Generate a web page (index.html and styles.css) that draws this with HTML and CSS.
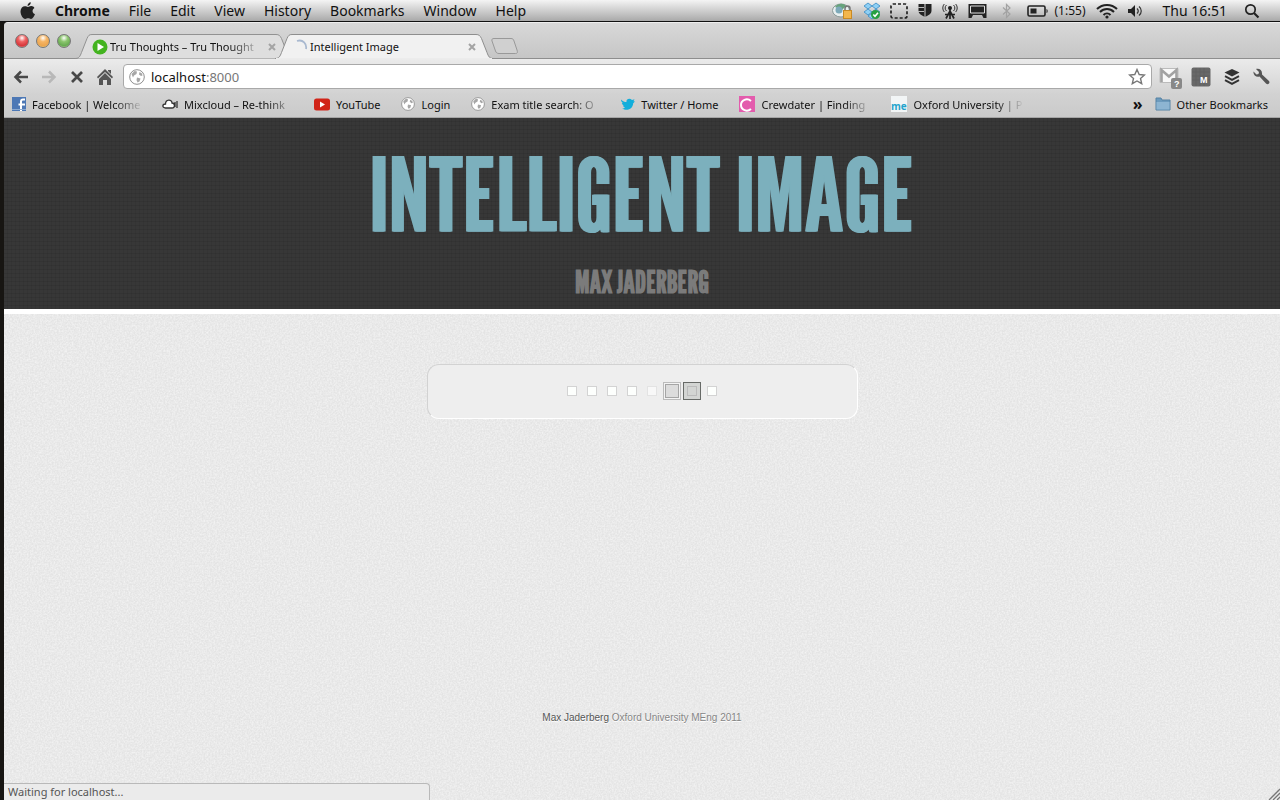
FILE: index.html
```html
<!DOCTYPE html>
<html lang="en">
<head>
<meta charset="utf-8">
<title>Intelligent Image</title>
<link rel="stylesheet" href="styles.css">
</head>
<body>
<header class="menubar">
  <nav class="menus" aria-label="Application menu">
    <button class="apple" aria-label="Apple"><svg width="16" height="18" viewBox="0 0 16 18"><path fill="#222" d="M10.800 0.300c.2 1.800-1.500 3.700-3.200 3.600-.2-1.700 1.500-3.500 3.200-3.600zM8 4.900c.8 0 1.800-.9 3.300-.8 1.400.1 2.500.8 3.100 1.800-2.700 1.700-2.300 5.100.6 6.200-.8 2.300-2.300 4.900-4 4.900-1.100 0-1.600-.7-2.900-.7s-1.800.7-2.900.7C3 17 .4 12.700.5 9.300.6 6 2.700 4.200 4.900 4.200c1.300 0 2.300.7 3.100.7z"/></svg></button>
    <button class="app">Chrome</button><button>File</button><button>Edit</button><button>View</button><button>History</button><button>Bookmarks</button><button>Window</button><button>Help</button>
  </nav>
  <div class="status-items">
    <svg width="22" height="18" viewBox="0 0 22 18"><ellipse cx="9" cy="8.500" rx="8.500" ry="6.500" fill="#e9efef" stroke="#8a9a98"/><path d="M3 5c3-4 9-4 11-1l-4 4z" fill="#67a37b"/><circle cx="7" cy="8" r="3.500" fill="#7da9b9"/><path d="M13 9V6.500a2.500 2.500 0 0 1 5 0V9" fill="none" stroke="#777" stroke-width="1.500"/><rect x="11.500" y="8.500" width="8" height="8" fill="#f3b64c" stroke="#c98a24"/></svg>
    <svg width="18" height="18" viewBox="0 0 18 18"><path d="M5 1l4 3-4 3-4-3zm8 0l4 3-4 3-4-3zM5 7l4 3-4 3-4-3zm8 0l4 3-4 3-4-3zM9 11l4 3-4 3-4-3z" fill="#8fd0f5" stroke="#378cc4" stroke-width=".8"/><circle cx="12.500" cy="12.500" r="4.500" fill="#26a041"/><path d="M10.300 12.500l1.700 1.800 3-3.500" fill="none" stroke="#fff" stroke-width="1.600"/></svg>
    <svg width="18" height="16" viewBox="0 0 18 16"><rect x="1" y="1" width="16" height="14" rx="2" fill="none" stroke="#222" stroke-width="1.700" stroke-dasharray="3 2"/></svg>
    <svg class="wide" width="14" height="15" viewBox="0 0 14 15"><path fill="#222" d="M.5 1h6v12.800C3 12 .5 10.500.5 8zM7.500 1h6v7c0 2.500-2.500 4-6 5.800z"/><path stroke="#bbb" d="M0 4.500h6M0 8.500h6"/></svg>
    <svg class="wide" width="16" height="16" viewBox="0 0 16 16"><path d="M8 5v11M4 15.500L8 8l4 7.500M3 11.500h10" fill="none" stroke="#222" stroke-width="1.700"/><circle cx="8" cy="5" r="2" fill="#222"/><path d="M4.500 2a4 4 0 0 0 0 6M11.500 2a4 4 0 0 1 0 6M2.300 1a6 6 0 0 0 0 8M13.700 1a6 6 0 0 1 0 8" fill="none" stroke="#333"/></svg>
    <svg class="wide" width="19" height="16" viewBox="0 0 19 16"><path d="M.5 1h18v14h-3l-1.500-3h-9L3.500 15h-3z" fill="#222"/><path d="M2.500 3h14v7h-14z" fill="none" stroke="#ddd"/></svg>
    <svg class="bt" width="10" height="16" viewBox="0 0 10 16"><path d="M1 4.500l7 6.500-3.500 3.500V1.500L8 5l-7 6.500" fill="none" stroke="#a2a2a2" stroke-width="1.200"/></svg>
    <svg width="22" height="14" viewBox="0 0 22 14"><rect x="1" y="2" width="17" height="10" rx="1.500" fill="none" stroke="#222" stroke-width="1.600"/><path d="M3.500 4.500h6v5h-6z" fill="#222"/><path d="M19.500 5c1.500 0 1.500 4 0 4z" fill="#222"/></svg>
    <span class="charge">(1:55)</span>
    <svg width="22" height="16" viewBox="0 0 22 16"><path d="M1 6c5.500-5.500 14.500-5.500 20 0M4 9c4-4 10-4 14 0M7.500 12c2-2 5-2 7 0" fill="none" stroke="#222" stroke-width="2"/><circle cx="11" cy="14" r="1.600" fill="#222"/></svg>
    <svg width="16" height="14" viewBox="0 0 16 14"><path d="M1 5h3l4-4v12L4 9H1z" fill="#222"/><path d="M10 4.500c1.500 1.500 1.500 3.500 0 5M12 2.500c3 2.500 3 6.500 0 9" fill="none" stroke="#333" stroke-width="1.200"/></svg>
    <span class="clock">Thu 16:51</span>
    <svg width="16" height="16" viewBox="0 0 16 16"><circle cx="6.500" cy="6.500" r="4.700" fill="none" stroke="#222" stroke-width="1.700"/><path d="M10 10l4.500 4.500" stroke="#222" stroke-width="2.200"/></svg>
  </div>
</header>

<div class="window">
  <div class="tabstrip">
    <div class="lights"><button class="light red" aria-label="Close"></button><button class="light amber" aria-label="Minimise"></button><button class="light green" aria-label="Zoom"></button></div>
    <div class="tabs">
      <div class="tab">
        <svg class="tab-shape" viewBox="0 0 218 25"><path d="M0 24.500c4 0 5-2 6.500-6L12 4.500C13.500 1.500 14 .5 17 .5h184c3 0 4 1 5.500 4l5.500 14c1.500 4 2.500 6 6 6" fill="#dedede" stroke="#929292"/></svg>
        <svg width="16" height="16" viewBox="0 0 16 16"><circle cx="8" cy="8" r="7.500" fill="#43b31f"/><path d="M5.500 4l6.500 4-6.500 4z" fill="#fff"/></svg>
        <a href="#" class="tab-title fade">Tru Thoughts – Tru Thought</a>
        <button class="tab-close" aria-label="Close tab"><svg width="8" height="8" viewBox="0 0 8 8"><path d="M1 1l6 6M7 1L1 7" stroke="#a4a4a4" stroke-width="2"/></svg></button>
      </div>
      <div class="tab active">
        <svg class="tab-shape" viewBox="0 0 218 25"><path d="M0 24.500c4 0 5-2 6.500-6L12 4.500C13.500 1.500 14 .5 17 .5h184c3 0 4 1 5.500 4l5.500 14c1.500 4 2.500 6 6 6" fill="#f1f1f1" stroke="#8e8e8e"/><path d="M1 25h216" stroke="#ececec" stroke-width="2"/></svg>
        <svg width="16" height="16" viewBox="0 0 16 16"><path d="M5 2c6-2 10 3 9 8" fill="none" stroke="#a9b9d0" stroke-width="1.800"/></svg>
        <a href="#" class="tab-title">Intelligent Image</a>
        <button class="tab-close" aria-label="Close tab"><svg width="8" height="8" viewBox="0 0 8 8"><path d="M1 1l6 6M7 1L1 7" stroke="#a4a4a4" stroke-width="2"/></svg></button>
      </div>
      <button class="new-tab" aria-label="New tab"><svg width="27" height="17" viewBox="0 0 27 17"><path d="M3 .5h17c2 0 2.500 1 3 2.500l3 9c.8 2.500.5 3.500-1.500 3.500H8c-2 0-3-1-3.500-2.500l-3.500-10C.5 1.500 1 .5 3 .5z" fill="#d0d0d0" stroke="#999"/></svg></button>
    </div>
  </div>

  <div class="toolbar">
    <button aria-label="Back"><svg width="16" height="16" viewBox="0 0 16 16"><path d="M15 8H3M8 2.500L2.500 8 8 13.500" fill="none" stroke="#484848" stroke-width="2.500"/></svg></button>
    <button aria-label="Forward"><svg width="16" height="16" viewBox="0 0 16 16"><path d="M1 8h12M8 2.500L13.500 8 8 13.500" fill="none" stroke="#b8b8b8" stroke-width="2.500"/></svg></button>
    <button aria-label="Stop"><svg width="16" height="16" viewBox="0 0 16 16"><path d="M3 3l10 10M13 3L3 13" stroke="#484848" stroke-width="2.700"/></svg></button>
    <button aria-label="Home"><svg width="16" height="16" viewBox="0 0 16 16"><path d="M8 0l8 8-1 1.500L8 3 1 9.500 0 8zM11 1h3v4l-3-3zM8 4l6 6v6h-4v-5H6v5H2v-6z" fill="#555"/></svg></button>
    <div class="omnibox">
      <svg width="16" height="16" viewBox="0 0 16 16"><circle cx="8" cy="8" r="7.300" fill="#fff" stroke="#8f8f8f"/><path d="M2.500 5l3-3 2.500.5-.5 2.500-2.500 1.500-1 2zM10.500 3l2.500 1.500.5 2-1.500.5-2-1.500zM8 8.500l3.500 1-1 3-2 1-1-2.500z" fill="#a6a6a6"/></svg>
      <div class="address" contenteditable="true" role="textbox" aria-label="Address">localhost<span>:8000</span></div>
      <button aria-label="Bookmark this page"><svg width="18" height="17" viewBox="0 0 18 17"><path d="M9 1.500l2.200 5 5.300.5-4 3.500 1.200 5.200L9 13l-4.700 2.700 1.200-5.200-4-3.500 5.300-.5z" fill="#fff" stroke="#777" stroke-width="1.400"/></svg></button>
    </div>
    <div class="extensions">
      <button aria-label="Mail"><svg width="24" height="24" viewBox="0 0 24 24"><path d="M1 3.500h18v14H1z" fill="#f8f8f8" stroke="#bbb"/><path d="M2.500 17V5L10 11.500 17.500 5V17" fill="none" stroke="#a2a2a2" stroke-width="2.600"/><rect x="12" y="13" width="11" height="11" rx="2" fill="#888"/><text x="15" y="22" class="badge-text">?</text></svg></button>
      <button aria-label="M extension"><svg width="20" height="20" viewBox="0 0 20 20"><rect x=".5" y=".5" width="19" height="19" rx="2" fill="#686868"/><path d="M1 5h18M1 9h18M1 13h18M5 1v18M9 1v18M13 1v18" stroke="#606060"/><text x="9" y="16" class="badge-text">M</text></svg></button>
      <button aria-label="Layers"><svg width="16" height="16" viewBox="0 0 16 16"><path d="M8 0l7.500 3.500L8 7.500.5 3.500z" fill="#333"/><path d="M1 7.200l7 3.600 7-3.600M1 11.200l7 3.600 7-3.600" fill="none" stroke="#333" stroke-width="2"/></svg></button>
      <button aria-label="Settings"><svg width="17" height="17" viewBox="0 0 17 17"><path d="M3 1l3 3-.5 2-2 .5L.5 3.500C0 7 3 9.500 6.500 8.500l6.500 7c2 2 4.500-.5 3-2.500L9 6.500C9.500 2.500 6.500 0 3 1z" fill="#555"/></svg></button>
    </div>
  </div>

  <nav class="bookmarks" aria-label="Bookmarks">
    <a href="#"><svg width="14" height="14" viewBox="0 0 14 14"><path d="M0 0h14v14H0z" fill="#4d78b5"/><path d="M13 2.500h-2q-2 0-2 2V14M6.500 7.500H13" fill="none" stroke="#fff" stroke-width="2"/><path d="M0 12.500h14" stroke="#8caad1"/></svg><span class="long">Facebook | Welcome</span></a>
    <a href="#"><svg width="16" height="12" viewBox="0 0 16 12"><path d="M3.500 10C0 10 0 6 3.500 6 3.500 1 10 1 10 5c3 0 3.500 5 0 5zM13 4v5M15 3v7" fill="#fff" stroke="#333" stroke-width="1.300"/></svg><span class="long">Mixcloud – Re-think</span></a>
    <a href="#"><svg width="16" height="13" viewBox="0 0 16 13"><rect y=".5" width="16" height="12" rx="2.500" fill="#d12418"/><path d="M6 3.500l5 3-5 3z" fill="#fff"/></svg><span class="short">YouTube</span></a>
    <a href="#"><svg width="14" height="14" viewBox="0 0 16 16"><circle cx="8" cy="8" r="7.300" fill="#fff" stroke="#8f8f8f"/><path d="M2.500 5l3-3 2.500.5-.5 2.500-2.500 1.500-1 2zM10.500 3l2.500 1.500.5 2-1.500.5-2-1.500zM8 8.500l3.500 1-1 3-2 1-1-2.500z" fill="#a6a6a6"/></svg><span class="short">Login</span></a>
    <a href="#"><svg width="14" height="14" viewBox="0 0 16 16"><circle cx="8" cy="8" r="7.300" fill="#fff" stroke="#8f8f8f"/><path d="M2.500 5l3-3 2.500.5-.5 2.500-2.500 1.500-1 2zM10.500 3l2.500 1.500.5 2-1.500.5-2-1.500zM8 8.500l3.500 1-1 3-2 1-1-2.500z" fill="#a6a6a6"/></svg><span class="long">Exam title search: O</span></a>
    <a href="#"><svg width="14" height="12" viewBox="0 0 14 12"><path d="M0 1.500c2 2 3.500 2.500 5.500 2.500C5 1 8.500-.5 11 2l2.500-.7-1 2 1.500.2-1.800 1.700C12 10 7 14 1 10.500c1.500 0 2.500-.5 3-1C2.500 9 2 8 2 7.500H3C1.500 7 .5 5.500 1 5l1 .2C.5 4 0 3 0 1.500z" fill="#12aedb"/></svg><span class="short">Twitter / Home</span></a>
    <a href="#"><svg width="16" height="16" viewBox="0 0 16 16"><path d="M0 0h16v16H0z" fill="#e35cad"/><path d="M12 5C8 1.500 2 4 2 9s6 7.500 10 4" fill="none" stroke="#fff" stroke-width="2"/></svg><span class="long">Crewdater | Finding</span></a>
    <a href="#"><svg width="16" height="16" viewBox="0 0 16 16"><path d="M0 0h16v16H0z" fill="#f2f5f6"/><text x="0" y="14" class="me-text">me</text></svg><span class="long">Oxford University | P</span></a>
    <span class="other"><button aria-label="More bookmarks" class="more">»</button><a href="#"><svg width="16" height="14" viewBox="0 0 16 14"><path d="M1 3V1h5l1 2h8v10H1z" fill="#6d9bbd" stroke="#5482a4"/><path d="M1.500 5h13v7.500h-13z" fill="#8db5d2"/></svg><span>Other Bookmarks</span></a></span>
  </nav>

  <main class="page">
    <div class="hero"><h1>INTELLIGENT IMAGE</h1><h2>MAX JADERBERG</h2></div>
    <div class="content">
      <svg class="grain" aria-hidden="true"><filter id="grain"><feTurbulence type="fractalNoise" baseFrequency=".6" numOctaves="2" seed="4"/><feColorMatrix values="0 0 0 0 1  0 0 0 0 1  0 0 0 0 1  1 0 0 0 -.3"/></filter><rect width="100%" height="100%" filter="url(#grain)"/></svg>
      <div class="loader" role="progressbar" aria-label="Loading"><i></i><i></i><i></i><i></i><i class="faint"></i><i class="ring"></i><i class="peak"></i><i></i></div>
      <footer><a href="#">Max Jaderberg</a> Oxford University MEng 2011</footer>
    </div>
  </main>
  <div class="status">Waiting for localhost...</div>
  <svg class="grip" width="12" height="12" viewBox="0 0 12 12"><path d="M1 12L12 1M5 12l7-7M9 12l3-3" stroke="#777" stroke-width="1.300"/></svg>
</div>
</body>
</html>
```
FILE: styles.css
```css
* { box-sizing: border-box; }
body {
  margin: 0;
  min-height: 100vh;
  display: flex;
  flex-direction: column;
  background: #171512;
  color: #111;
  font-family: "Lucida Grande", "Noto Sans", "Open Sans", sans-serif;
  font-size: 11px;
}
button { border: 0; margin: 0; padding: 0; background: none; font: inherit; color: inherit; display: flex; align-items: center; }
a { color: inherit; text-decoration: none; }
svg { flex: none; display: block; }

.menubar {
  display: flex;
  justify-content: space-between;
  height: 22px;
  padding: 0 20px;
  border-bottom: 1px solid #111;
  background: linear-gradient(#f4f4f4, #a9a9a9);
  font-size: 14px;
}
.menus, .status-items { display: flex; align-items: center; }
.menus { gap: 19px; }
.menus .app { font-weight: 700; }
.status-items { gap: 9px; }
.status-items .wide { margin-left: 1px; }
.status-items .bt { margin: 0 6px; }
.charge { font-size: 12px; margin: 0 2px 0 -4px; }
.clock { margin: 0 8px 0 10px; }

.window {
  flex: 1;
  display: flex;
  flex-direction: column;
  position: relative;
  margin: 0 0 0 4px;
  border-top: 1px solid #eee;
  border-top-left-radius: 4px;
  background: #d2d2d2;
}
.tabstrip {
  display: flex;
  height: 36px;
  align-items: flex-end;
  border-top-left-radius: 4px;
  background: linear-gradient(#d8d8d8, #c6c6c6);
  border-bottom: 1px solid #8e8e8e;
}
.lights { display: flex; gap: 7px; padding: 0 4px 10px 11px; }
.light { width: 14px; height: 14px; border-radius: 50%; border: 1px solid #777; }
.red { background: radial-gradient(circle at 50% 25%, #fff 0, #ef6262 35%, #d7373b 70%, #f29b9b); }
.amber { background: radial-gradient(circle at 50% 25%, #fff 0, #f5b566 35%, #eca650 70%, #ffe08a); }
.green { background: radial-gradient(circle at 50% 25%, #fff 0, #8cc66f 35%, #68ab52 70%, #c2eaa0); }
.tabs { display: flex; align-items: center; }
.tab {
  position: relative;
  display: flex;
  align-items: center;
  gap: 2px;
  width: 218px;
  height: 25px;
  padding: 0 17px;
  margin-bottom: -1px;
}
.tab + .tab { margin-left: -18px; }
.tab > * { position: relative; }
.tab .tab-shape { position: absolute; inset: 0; width: 100%; height: 100%; }
.tab-title { flex: 1; white-space: nowrap; overflow: hidden; color: #111; }
.fade { -webkit-mask-image: linear-gradient(90deg, #000 78%, transparent); mask-image: linear-gradient(90deg, #000 78%, transparent); }
.tab-close { padding-left: 3px; }
.new-tab { margin-left: -2px; }

.toolbar {
  display: flex;
  align-items: center;
  gap: 12px;
  height: 35px;
  padding: 0 10px 0 9px;
  background: linear-gradient(#ebebeb, #d2d2d2);
}
.omnibox {
  flex: 1;
  display: flex;
  align-items: center;
  gap: 6px;
  height: 25px;
  margin: 0 -5px 0 -2px;
  padding: 0 5px;
  border: 1px solid #a9a9a9;
  border-radius: 4px;
  background: #fff;
}
.address { flex: 1; font-size: 13px; line-height: 20px; outline: none; }
.address span { color: #777; }
.extensions { display: flex; align-items: center; gap: 13px; }
.extensions button:first-child { margin-right: -5px; }
.badge-text { fill: #fff; font: 700 9px "Liberation Sans", sans-serif; }
.me-text { fill: #25a4cc; font: 700 10px "Open Sans", sans-serif; }

.bookmarks {
  display: flex;
  align-items: center;
  gap: 19px;
  height: 24px;
  padding: 0 12px 3px 8px;
  background: linear-gradient(#d2d2d2, #cacaca);
  border-bottom: 1px solid #a5a5a5;
  white-space: nowrap;
}
.bookmarks a { display: flex; align-items: center; gap: 6px; }
.long { width: 111px; overflow: hidden; -webkit-mask-image: linear-gradient(90deg, #000 75%, transparent); mask-image: linear-gradient(90deg, #000 75%, transparent); }
.short { padding-right: 2px; }
.other { display: flex; gap: 12px; margin-left: auto; }
.more { font-size: 16px; font-weight: 700; line-height: 16px; }

.page { flex: 1; display: flex; flex-direction: column; }
.hero {
  height: 196px;
  padding-top: 16px;
  border-bottom: 5px solid #fff;
  background: repeating-linear-gradient(90deg, transparent 0 3px, rgba(0, 0, 0, .06) 3px 4px), repeating-linear-gradient(#373737 0 3px, #333 3px 4px);
  text-align: center;
  font-family: "League Gothic", "Oswald", "Noto Sans ExtraCondensed", "Open Sans Condensed", "Roboto Condensed", "Liberation Sans Narrow", sans-serif;
}
.hero h1 { margin: 0; font-size: 102px; font-weight: 400; line-height: 120px; color: #7cb0bd; text-shadow: 1px 0 #7cb0bd, -1px 0 #7cb0bd; }
.hero h2 { margin: 0; font-size: 30px; line-height: 56px; color: #7b7b7b; }
.content { position: relative; flex: 1; display: flex; flex-direction: column; align-items: center; padding-top: 50px; background: #e4e4e4; }
.grain { position: absolute; inset: 0; width: 100%; height: 100%; }
.loader {
  position: relative;
  display: flex;
  justify-content: center;
  gap: 2px;
  width: 431px;
  padding: 17px 0 18px;
  border: 1px solid;
  border-color: #d2d2d2 #fff #fff #d2d2d2;
  border-radius: 12px;
  background: #eee;
}
.loader i { width: 18px; height: 18px; border: 4px solid #eee; background: #fdfffd; outline: 1px solid #d3d3d3; outline-offset: -5px; }
.loader .faint { background: #f8f8f8; outline-color: #e3e3e3; }
.loader .ring { border: 1px solid #bbb; background: #dcdcdc; outline-color: #a5a5a5; outline-offset: -3px; box-shadow: inset 0 0 0 1px #f3f3f3; }
.loader .peak { border: 1px solid #676a67; background: #d3d5d3; outline-color: #bbb; }
footer { position: relative; margin-top: 292px; font-family: "Liberation Sans", sans-serif; font-size: 10px; line-height: 14px; color: #858585; text-shadow: 0 1px #fff; }
footer a { color: #555; }
.status {
  position: absolute;
  left: 0;
  bottom: 0;
  width: 426px;
  height: 17px;
  padding-left: 4px;
  border: 1px solid #b9b9b9;
  border-width: 1px 1px 0 0;
  border-top-right-radius: 4px;
  background: #ebebeb;
  color: #555;
  line-height: 16px;
}
.grip { position: absolute; right: 0; bottom: 0; }
```
